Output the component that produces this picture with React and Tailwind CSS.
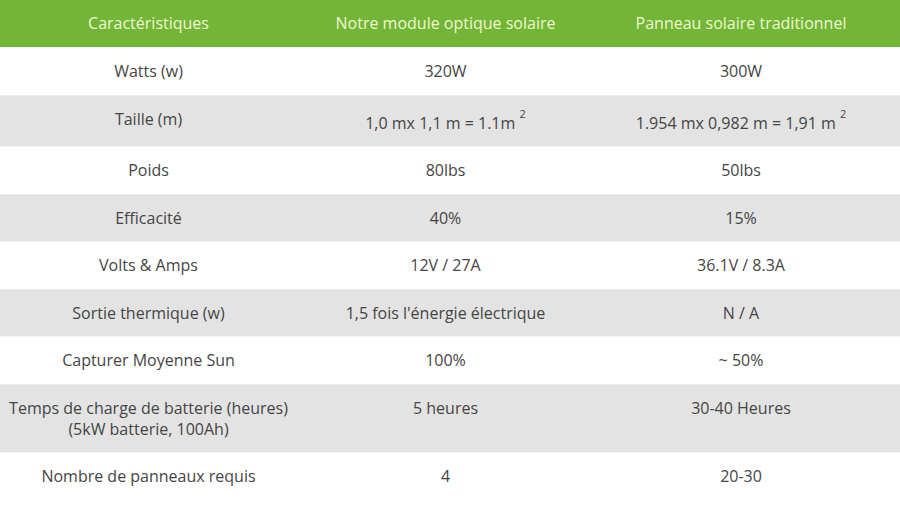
import React from "react";

const rows = [
  ["Watts (w)", "320W", "300W"],
  ["Taille (m)", <>1,0 mx 1,1 m = 1.1m <sup>2</sup></>, <>1.954 mx 0,982 m = 1,91 m <sup>2</sup></>],
  ["Poids", "80lbs", "50lbs"],
  ["Efficacité", "40%", "15%"],
  ["Volts & Amps", "12V / 27A", "36.1V / 8.3A"],
  ["Sortie thermique (w)", "1,5 fois l'énergie électrique", "N / A"],
  ["Capturer Moyenne Sun", "100%", "~ 50%"],
  [<>Temps de charge de batterie (heures)<br />(5kW batterie, 100Ah)</>, "5 heures", "30-40 Heures"],
  ["Nombre de panneaux requis", "4", "20-30"],
];

export default function App() {
  return (
    <div className="w-[900px] h-[505px] overflow-hidden bg-white font-['Open_Sans',sans-serif] text-[16px] leading-[21px] text-[#454545]">
      <table className="w-full table-fixed border-collapse text-center">
        <colgroup>
          <col className="w-[297px]" />
          <col className="w-[297px]" />
          <col />
        </colgroup>
        <thead>
          <tr className="bg-[#73b537] text-[#eef8cf]">
            <th className="font-normal py-[13px]">Caractéristiques</th>
            <th className="font-normal py-[13px]">Notre module optique solaire</th>
            <th className="font-normal py-[13px] pr-[12px]">Panneau solaire traditionnel</th>
          </tr>
        </thead>
        <tbody>
          {rows.map((r, i) => {
            const grey = i % 2 === 1;
            return (
              <tr
                key={i}
                className={
                  grey
                    ? "bg-[#e3e3e3] border-t border-[#ececec]"
                    : "bg-white border-t border-[#f4f4f4]"
                }
              >
                {r.map((c, j) => (
                  <td
                    key={j}
                    className={
                      "align-top pt-[13px] [&_sup]:static [&_sup]:text-[11px] [&_sup]:leading-[10px] [&_sup]:align-[11px] " +
                      (grey ? "pb-[12px] " : "pb-[13px] ") +
                      (j === 2 ? "pr-[12px]" : "")
                    }
                  >
                    {c}
                  </td>
                ))}
              </tr>
            );
          })}
        </tbody>
      </table>
    </div>
  );
}
